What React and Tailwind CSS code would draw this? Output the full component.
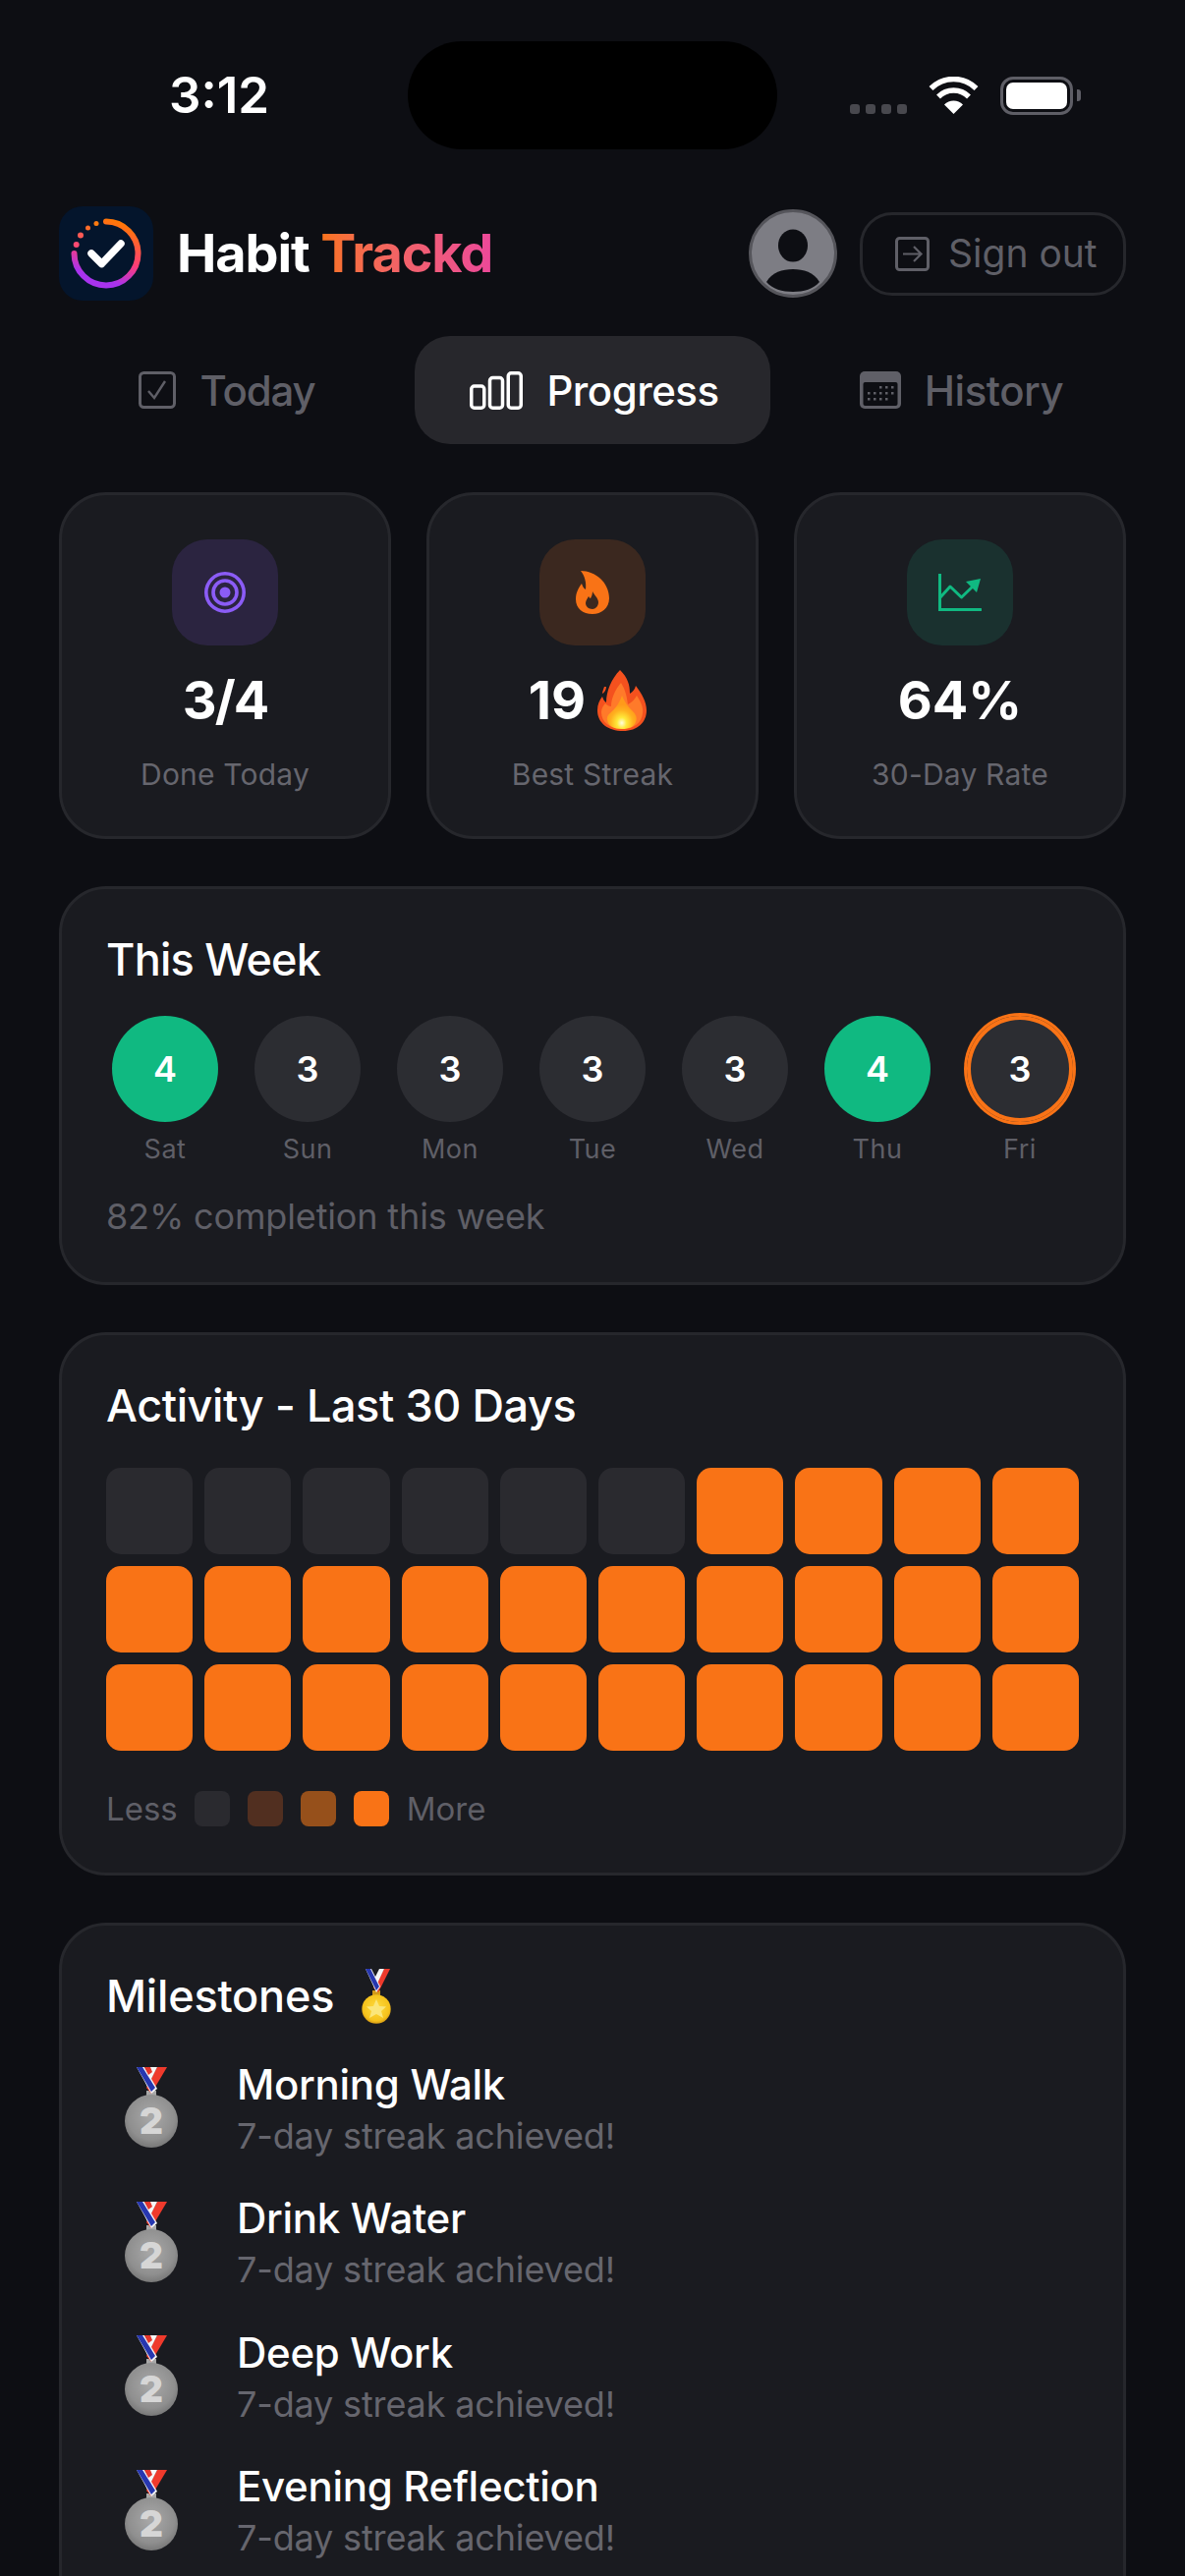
import React from "react";

function Flame() {
  return (
    <svg width="34" height="44" viewBox="0 0 34 44">
      <path fillRule="evenodd" fill="#f97316" d="M5 0C20 0 34 12 34 28C34 38 26 44 17 44C7 44 0 38 0 29C0 22 3 17 6 13C7 16 8 18 10 19C11 12 9 5 5 0ZM17 21C19 25 23 28 23 32C23 36 20 39 17 39C13 39 10 36 10 33C10 30 12 28 13 26C14 27 14 28 15 28C16 26 17 24 17 21Z" />
    </svg>
  );
}

function FireEmoji() {
  return (
    <svg width="50" height="62" viewBox="0 0 50 62" className="mr-[10px]">
      <defs>
        <radialGradient id="fireCore" cx="0.5" cy="0.82" r="0.55">
          <stop offset="0" stopColor="#fffde0" />
          <stop offset="0.3" stopColor="#ffe93a" />
          <stop offset="0.7" stopColor="#ffb01f" />
          <stop offset="1" stopColor="#ff9a1a" />
        </radialGradient>
      </defs>
      <path fill="#f4511e" d="M23 0C31 8 33 15 33 24C36 22 38 20 39 16C45 24 50 32 50 41C50 53 41 62 26 62C11 62 0 54 0 41C0 35 2 31 5 27C6 30 7 32 9 33C9 22 14 9 23 0Z" />
      <path fill="#f4511e" d="M7 17C6 20 5 22 5 24C7 23 9 20 9 17Z" />
      <path fill="#ff7a2a" d="M24 13C29 21 30 28 31 35C35 33 38 30 40 26C44 32 47 38 46 44C45 54 37 60 25 60C13 60 4 53 4 43C4 39 6 36 8 34C10 36 12 37 14 37C14 29 18 20 24 13Z" />
      <path fill="url(#fireCore)" d="M25 26C28 33 31 37 35 41C39 45 41 48 39 53C37 58 32 60 25 60C17 60 11 57 10 51C9 46 13 44 16 41C20 37 23 32 25 26Z" />
    </svg>
  );
}

function SilverMedal() {
  return (
    <svg width="54" height="82" viewBox="0 0 54 82" className="block">
      <defs>
        <radialGradient id="silverDisc" cx="0.5" cy="0.42" r="0.62">
          <stop offset="0" stopColor="#a9a9a9" />
          <stop offset="0.7" stopColor="#8f8f8f" />
          <stop offset="1" stopColor="#727272" />
        </radialGradient>
      </defs>
      <rect x="22" y="24" width="10" height="6" fill="#a8a8a8" />
      <polygon points="43,0 33,0 22,21 27,27" fill="#ef3a2c" />
      <polygon points="33,0 26,0 20,13 23,20" fill="#f6f6f6" />
      <polygon points="12,0 20,0 33,22 27,27" fill="#f6f6f6" />
      <polygon points="12,0 18,0 31,21 27,25" fill="#2737b0" />
      <polygon points="20,0 26,0 28,5 24,8" fill="#e5352b" />
      <circle cx="27" cy="55" r="27" fill="url(#silverDisc)" />
      <text x="27" y="68" textAnchor="middle" fontFamily="Inter, sans-serif" fontWeight="900" fontSize="37" fill="#d6d6d6">2</text>
    </svg>
  );
}

function GoldMedal() {
  return (
    <svg width="30" height="56" viewBox="0 0 30 56" className="block">
      <defs>
        <radialGradient id="goldDisc" cx="0.5" cy="0.45" r="0.6">
          <stop offset="0" stopColor="#ffdc3f" />
          <stop offset="0.75" stopColor="#f5c21c" />
          <stop offset="1" stopColor="#c98a10" />
        </radialGradient>
      </defs>
      <rect x="11" y="22" width="8" height="5" fill="#d39a18" />
      <polygon points="29,0 23,0 12,19 17,24" fill="#ef3a2c" />
      <polygon points="23,0 18,0 13,10 15,17" fill="#f6f6f6" />
      <polygon points="4,0 10,0 19,18 15,24" fill="#f6f6f6" />
      <polygon points="4,0 9,0 18,18 15,22" fill="#2737b0" />
      <circle cx="15" cy="41" r="14.7" fill="url(#goldDisc)" />
      <polygon points="15,31 18,38 25,38.500 20,43 22,50 15,46 8,50 10,43 5,38.500 12,38" fill="#fbe67a" />
    </svg>
  );
}

function Logo() {
  return (
    <div className="w-[96px] h-[96px] rounded-[24px] bg-[#04152c] shrink-0">
      <svg width="96" height="96" viewBox="0 0 96 96" fill="none">
        <defs>
          <linearGradient id="ringGrad" x1="0.75" y1="0" x2="0.4" y2="1">
            <stop offset="0" stopColor="#ff7a00" />
            <stop offset="0.55" stopColor="#ff3d77" />
            <stop offset="0.9" stopColor="#a833ee" />
          </linearGradient>
        </defs>
        <path d="M48 15.500A32.500 32.500 0 1 1 15.500 48" stroke="url(#ringGrad)" strokeWidth="6" strokeLinecap="round" />
        <circle cx="17.700" cy="39" r="3" fill="#ff4a72" />
        <circle cx="22" cy="29.500" r="3" fill="#ff5a55" />
        <circle cx="29.500" cy="22" r="2.500" fill="#ff6d2a" />
        <circle cx="38" cy="17.500" r="2.500" fill="#ff7a10" />
        <path d="M33 48L43.500 58.500L63 38" stroke="#ffffff" strokeWidth="7.500" strokeLinecap="round" strokeLinejoin="round" />
      </svg>
    </div>
  );
}

function StatusRight() {
  return (
    <div className="flex items-center w-[415px] pl-[74px]">
      <div className="flex gap-[6px] self-end mb-[1px]">
        {[0, 1, 2, 3].map((i) => (
          <span key={i} className="w-[10px] h-[10px] rounded-[3px] bg-[#48484e]" />
        ))}
      </div>
      <svg width="51" height="38" viewBox="0 0 51 38" fill="none" className="ml-[22px]">
        <path d="M25.500 38L16 28.500A13.500 13.500 0 0 1 35 28.500Z" fill="#fff" />
        <path d="M10 20.500A22 22 0 0 1 41 20.500" stroke="#fff" strokeWidth="5.500" />
        <path d="M2.500 12A32.500 32.500 0 0 1 48.500 12" stroke="#fff" strokeWidth="5.500" />
      </svg>
      <div className="ml-[22px] w-[74px] h-[39px] rounded-[13px] border-[3px] border-[#5e5e66] p-[3px]">
        <div className="w-full h-full rounded-[7px] bg-white" />
      </div>
      <div className="ml-[4px] w-[4px] h-[12px] rounded-r-[3px] bg-[#5e5e66]" />
    </div>
  );
}

function TabToday() {
  return (
    <svg width="38" height="38" viewBox="0 0 38 38" fill="none" stroke="#5f5f67">
      <rect x="1.500" y="1.500" width="35" height="35" rx="4" strokeWidth="3" />
      <path d="M10 20L16 27L27 10" strokeWidth="2.400" />
    </svg>
  );
}

function TabProgress() {
  return (
    <svg width="54" height="39" viewBox="0 0 54 39" fill="none" stroke="#fff" strokeWidth="3.500">
      <rect x="1.750" y="15" width="13" height="22.250" rx="3" />
      <rect x="20.500" y="6.500" width="13" height="30.750" rx="3" />
      <rect x="39.250" y="1.750" width="13" height="35.500" rx="3" />
    </svg>
  );
}

function TabHistory() {
  const rows = [
    [20, 26, 32],
    [8, 14, 20, 26, 32],
    [8, 14, 20, 26],
  ];
  return (
    <svg width="42" height="38" viewBox="0 0 42 38">
      <rect width="42" height="38" rx="5" fill="#5f5f67" />
      <rect x="3.500" y="11" width="35" height="24" rx="2" fill="#0d0e13" />
      {rows.map((r, y) =>
        r.map((x) => <rect key={`${y}-${x}`} x={x} y={15 + y * 6} width="2.500" height="2.500" fill="#5f5f67" />)
      )}
    </svg>
  );
}

function Stat({ bg, icon, value, label, emoji, tight }) {
  return (
    <div className="h-[353px] rounded-[48px] border-[3px] border-[#26272c] bg-[#1a1b20] flex flex-col items-center pt-[45px]">
      <div className={`w-[108px] h-[108px] rounded-[36px] flex items-center justify-center ${bg}`}>{icon}</div>
      <div className="mt-[20px] h-[72px] flex items-center gap-[12px] text-[54px] leading-[72px] font-bold text-white">
        <span className={tight ? "tracking-[-2px]" : ""}>{value}</span>
        {emoji}
      </div>
      <div className="mt-[18px] text-[30px] leading-[42px] tracking-[0.2px] text-[#66666e]">{label}</div>
    </div>
  );
}

const week = [
  ["4", "Sat", "bg-[#10b981]"],
  ["3", "Sun", "bg-[#2c2d32]"],
  ["3", "Mon", "bg-[#2c2d32]"],
  ["3", "Tue", "bg-[#2c2d32]"],
  ["3", "Wed", "bg-[#2c2d32]"],
  ["4", "Thu", "bg-[#10b981]"],
  ["3", "Fri", "bg-[#2c2d32] shadow-[0_0_0_3px_#f97316,inset_0_0_0_4px_#f97316]"],
];

const milestones = ["Morning Walk", "Drink Water", "Deep Work", "Evening Reflection"];

export default function App() {
  const cells = Array.from({ length: 30 }, (_, i) => i);
  return (
    <div className="h-[2622px] w-[1206px] overflow-hidden bg-[#0d0e13] font-['Inter',sans-serif]">
      <div className="flex items-center pt-[42px] h-[152px]">
        <div className="w-[415px] pl-[172px] text-[51px] font-semibold leading-[60px] text-white">3:12</div>
        <div className="w-[376px] h-[110px] rounded-[55px] bg-black" />
        <StatusRight />
      </div>

      <div className="mt-[58px] px-[60px] h-[96px] flex items-center justify-between">
        <div className="flex items-center gap-[24px]">
          <Logo />
          <div className="text-[54px] font-bold leading-[64px] tracking-[-1.1px] text-white">
            Habit{" "}
            <span className="bg-linear-to-r from-[#f97316] to-[#ec4899] bg-clip-text text-transparent">Trackd</span>
          </div>
        </div>
        <div className="flex items-center gap-[23px]">
          <div className="w-[90px] h-[90px] rounded-full border-[3px] border-[#55555b] bg-[#7d7d84] overflow-hidden">
            <svg width="84" height="84" viewBox="3 3 84 84">
              <ellipse cx="45" cy="37" rx="15" ry="16.500" fill="#0d0e13" />
              <path d="M18 74C24 64 34 61 45 61C56 61 66 64 72 74C66 81 56 84 45 84C34 84 24 81 18 74Z" fill="#0d0e13" />
            </svg>
          </div>
          <div className="w-[271px] h-[85px] rounded-[33px] border-[3px] border-[#26272c] flex items-center pl-[33px] gap-[19px]">
            <svg width="35" height="35" viewBox="0 0 35 35" fill="none" stroke="#5f5f67" strokeWidth="3">
              <rect x="1.500" y="1.500" width="32" height="32" rx="3" />
              <path d="M8 17.500H26M19 10L26.500 17.500L19 25" strokeWidth="2.200" />
            </svg>
            <span className="text-[39px] leading-[50px] text-[#5f5f67]">Sign out</span>
          </div>
        </div>
      </div>

      <div className="mt-[36px] mx-[60px] grid grid-cols-3">
        <div className="h-[110px] flex items-center justify-center gap-[25px] pr-[21px]">
          <TabToday />
          <span className="text-[42px] font-medium tracking-[-1.2px] text-[#5f5f67]">Today</span>
        </div>
        <div className="h-[110px] rounded-[36px] bg-[#27272c] flex items-center justify-center gap-[24px] pl-[4px]">
          <TabProgress />
          <span className="text-[42px] font-medium tracking-[-0.5px] text-white">Progress</span>
        </div>
        <div className="h-[110px] flex items-center justify-center gap-[24px] pl-[27px]">
          <TabHistory />
          <span className="text-[42px] font-medium tracking-[-0.5px] text-[#5f5f67]">History</span>
        </div>
      </div>

      <div className="mt-[49px] mx-[60px] grid grid-cols-3 gap-[36px]">
        <Stat
          bg="bg-[#2b2440]"
          value="3/4"
          tight
          label="Done Today"
          icon={
            <svg width="42" height="42" viewBox="0 0 42 42" fill="none" stroke="#8b5cf6" strokeWidth="3.600">
              <circle cx="21" cy="21" r="19.200" />
              <circle cx="21" cy="21" r="12" />
              <circle cx="21" cy="21" r="5.500" fill="#8b5cf6" stroke="none" />
            </svg>
          }
        />
        <Stat bg="bg-[#3b281f]" value="19" label="Best Streak" emoji={<FireEmoji />} icon={<Flame />} />
        <Stat
          bg="bg-[#1a312f]"
          value="64%"
          label="30-Day Rate"
          icon={
            <svg width="44" height="38" viewBox="0 0 44 38" fill="none" stroke="#10b981">
              <path d="M1.500 0V36.500H43" strokeWidth="3" strokeLinecap="round" />
              <path d="M2 24L12 13L23.500 24L37 11" strokeWidth="3" strokeLinecap="round" strokeLinejoin="round" />
              <polygon points="28,8 43,5 39,19" fill="#10b981" stroke="none" />
            </svg>
          }
        />
      </div>

      <div className="mt-[48px] mx-[60px] h-[406px] rounded-[48px] border-[3px] border-[#26272c] bg-[#1a1b20] pt-[42px] px-[45px]">
        <div className="text-[45px] leading-[60px] font-[550] tracking-[-0.75px] text-white">This Week</div>
        <div className="mt-[27px] px-[6px] flex justify-between">
          {week.map(([n, d, c]) => (
            <div key={d} className="w-[108px] flex flex-col items-center">
              <div className={`w-[108px] h-[108px] rounded-full flex items-center justify-center text-[36px] font-semibold text-white ${c}`}>{n}</div>
              <div className="mt-[10px] text-[27px] leading-[36px] tracking-[0.5px] text-[#5f5f67]">{d}</div>
            </div>
          ))}
        </div>
        <div className="mt-[23px] text-[36px] leading-[54px] tracking-[-0.15px] text-[#5f5f67]">82% completion this week</div>
      </div>

      <div className="mt-[48px] mx-[60px] h-[553px] rounded-[48px] border-[3px] border-[#26272c] bg-[#1a1b20] pt-[42px] px-[45px]">
        <div className="text-[45px] leading-[60px] font-[550] tracking-[-0.4px] text-white">Activity - Last 30 Days</div>
        <div className="mt-[33px] grid grid-cols-10 gap-[12px]">
          {cells.map((i) => (
            <div key={i} className={`h-[88px] rounded-[15px] ${i < 6 ? "bg-[#2a2a2f]" : "bg-[#f97316]"}`} />
          ))}
        </div>
        <div className="mt-[41px] flex items-center">
          <span className="text-[33px] leading-[36px] text-[#5f5f67]">Less</span>
          <div className="ml-[17px] flex gap-[18px]">
            <span className="w-[36px] h-[36px] rounded-[8px] bg-[#2a2a2f]" />
            <span className="w-[36px] h-[36px] rounded-[8px] bg-[#512f20]" />
            <span className="w-[36px] h-[36px] rounded-[8px] bg-[#96501b]" />
            <span className="w-[36px] h-[36px] rounded-[8px] bg-[#f97316]" />
          </div>
          <span className="ml-[18px] text-[33px] leading-[36px] text-[#5f5f67]">More</span>
        </div>
      </div>

      <div className="mt-[48px] mx-[60px] rounded-t-[48px] border-[3px] border-[#26272c] bg-[#1a1b20] pt-[42px] px-[45px] pb-[60px]">
        <div className="flex items-center gap-[28px] h-[60px]">
          <span className="text-[45px] leading-[60px] font-[550] tracking-[-0.2px] text-white">Milestones</span>
          <GoldMedal />
        </div>
        <div className="mt-[32.500px] flex flex-col gap-[31.600px]">
          {milestones.map((m) => (
            <div key={m} className="flex items-start pl-[19px] gap-[60px]">
              <div className="pt-[9.500px]">
                <SilverMedal />
              </div>
              <div>
                <div className="text-[42px] leading-[54px] font-[550] tracking-[-0.3px] text-white">{m}</div>
                <div className="text-[36px] leading-[51px] tracking-[-0.15px] text-[#66666e]">7-day streak achieved!</div>
              </div>
            </div>
          ))}
        </div>
      </div>
    </div>
  );
}
